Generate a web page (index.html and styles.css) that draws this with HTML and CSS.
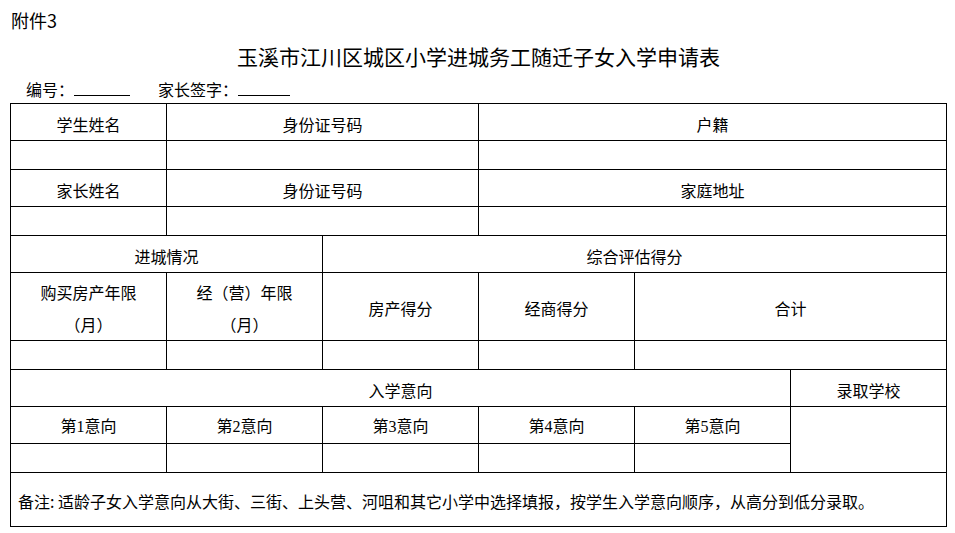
FILE: index.html
```html
<!DOCTYPE html>
<html lang="zh-CN">
<head>
<meta charset="utf-8">
<title>玉溪市江川区城区小学进城务工随迁子女入学申请表</title>
<link rel="stylesheet" href="styles.css">
</head>
<body>
<div class="page">
  <div class="attach">附件3</div>
  <h1 class="title">玉溪市江川区城区小学进城务工随迁子女入学申请表</h1>
  <div class="sign">
    <span class="label">编号：</span><span class="blank b1"></span>
    <span class="label gap">家长签字：</span><span class="blank b2"></span>
  </div>
  <table class="form">
    <colgroup>
      <col class="c"><col class="c"><col class="c"><col class="c"><col class="c"><col class="c">
    </colgroup>
    <tr class="h37">
      <td>学生姓名</td>
      <td colspan="2">身份证号码</td>
      <td colspan="3">户籍</td>
    </tr>
    <tr class="h29">
      <td></td>
      <td colspan="2"></td>
      <td colspan="3"></td>
    </tr>
    <tr class="h37">
      <td>家长姓名</td>
      <td colspan="2">身份证号码</td>
      <td colspan="3">家庭地址</td>
    </tr>
    <tr class="h29">
      <td></td>
      <td colspan="2"></td>
      <td colspan="3"></td>
    </tr>
    <tr class="h37">
      <td colspan="2">进城情况</td>
      <td colspan="4">综合评估得分</td>
    </tr>
    <tr class="h68">
      <td class="two">购买房产年限<br>（月）</td>
      <td class="two">经（营）年限<br>（月）</td>
      <td>房产得分</td>
      <td>经商得分</td>
      <td colspan="2">合计</td>
    </tr>
    <tr class="h29">
      <td></td><td></td><td></td><td></td><td colspan="2"></td>
    </tr>
    <tr class="h37">
      <td colspan="5">入学意向</td>
      <td>录取学校</td>
    </tr>
    <tr class="h37">
      <td class="num">第1意向</td>
      <td class="num">第2意向</td>
      <td class="num">第3意向</td>
      <td class="num">第4意向</td>
      <td class="num">第5意向</td>
      <td rowspan="2"></td>
    </tr>
    <tr class="h29">
      <td></td><td></td><td></td><td></td><td></td>
    </tr>
    <tr class="h54">
      <td colspan="6" class="note">备注: 适龄子女入学意向从大街、三街、上头营、河咀和其它小学中选择填报，按学生入学意向顺序，从高分到低分录取。</td>
    </tr>
  </table>
</div>
</body>
</html>
```

FILE: styles.css
```css
html, body {
  margin: 0;
  padding: 0;
  background: #fff;
}

body {
  font-family: "Noto Sans CJK SC", "Noto Sans", sans-serif;
  color: #000;
}

.page {
  padding: 8px 0 0 10px;
}

.attach {
  font-size: 18px;
  line-height: 24px;
  padding-left: 1px;
}

.title {
  margin: 9px 0 0;
  width: 937px;
  text-align: center;
  font-size: 21px;
  line-height: 30px;
  font-weight: normal;
}

.sign {
  margin-top: 7px;
  padding-left: 16px;
  font-size: 16px;
  line-height: 22px;
  height: 22px;
  display: flex;
  align-items: flex-start;
}

.label {
  display: inline-block;
}

.label.gap {
  margin-left: 28px;
}

.blank {
  display: inline-block;
  height: 17px;
  border-bottom: 1px solid #000;
}

.b1 { width: 56px; }
.b2 { width: 52px; }

.form {
  margin-top: 3px;
  width: 937px;
  table-layout: fixed;
  border-collapse: separate;
  border-spacing: 0;
  border-top: 1px solid #000;
  border-left: 1px solid #000;
}

.form col.c {
  width: 156px;
}

.form td {
  box-sizing: border-box;
  border-right: 1px solid #000;
  border-bottom: 1px solid #000;
  padding: 3px 0 0;
  text-align: center;
  vertical-align: middle;
  font-size: 16px;
  line-height: 22px;
}

.form td.two {
  line-height: 32px;
  padding-top: 2px;
}

.form td.num {
  font-family: "Liberation Serif", "Noto Sans CJK SC", serif;
}

.form td.note {
  text-align: left;
  padding: 3px 0 0 7px;
}

.h29 { height: 29px; }
.h37 { height: 37px; }
.h54 { height: 54px; }
.h68 { height: 68px; }
```
